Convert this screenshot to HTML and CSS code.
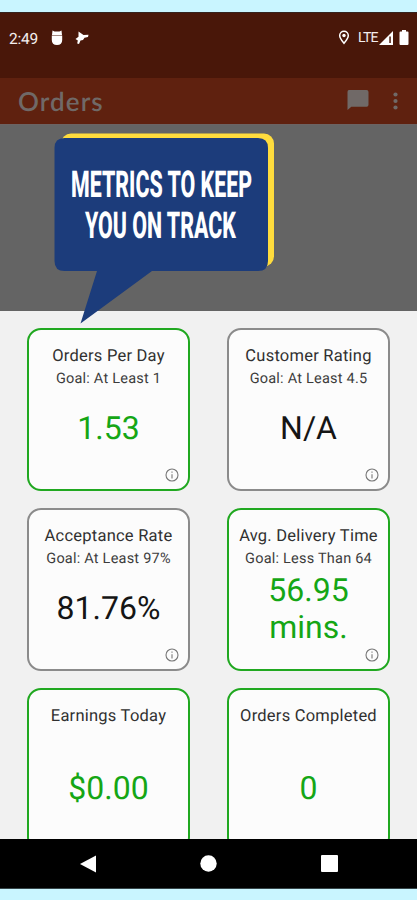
FILE: index.html
```html
<!DOCTYPE html>
<html lang="en">
<head>
<meta charset="utf-8">
<title>Orders</title>
<link rel="stylesheet" href="styles.css">
</head>
<body>
<div class="phone">
  <div class="status">
    <span class="time">2:49</span>
    <svg class="bug" width="12" height="16" viewBox="0 0 12 16" fill="#fff"><path d="M1.500.5 3.500 1.500h5l2-1 .5 4.500H1zM.8 5.500h10.400V10q0 5-5.200 5T.8 10z"/></svg>
    <svg class="bird" width="14" height="14" viewBox="0 0 14 14" fill="#fff"><path d="M3.500.5 8.500 4l5-.3-.5 2.300-3.500.8-1.500 2.200-2.500.5L4 13l-1.800-.5.6-3L.5 8l3-2.300z"/></svg>
    <span class="grow"></span>
    <svg class="pin" width="12" height="15" viewBox="0 0 12 15"><path d="M6 1.200A4.300 4.300 0 0 0 1.700 5.500C1.700 8.300 6 13.300 6 13.300s4.300-5 4.300-7.800A4.300 4.300 0 0 0 6 1.200z" fill="none" stroke="#fff" stroke-width="1.500"/><circle cx="6" cy="5.500" r="1.700" fill="#fff"/></svg>
    <span class="lte">LTE</span>
    <svg class="signal" width="14" height="14" viewBox="0 0 14 14"><path d="M0 14 14 0v14z" fill="#fff"/><path d="M10.300 5.500h1.500V12h-1.500z" fill="#491709"/></svg>
    <svg class="battery" width="10" height="15" viewBox="0 0 10 15" fill="#fff"><path d="M3 0h4v1.500h1.500q1 0 1 1V14q0 1-1 1h-7q-1 0-1-1V2.500q0-1 1-1H3z"/></svg>
  </div>
  <header class="bar">
    <h1>Orders</h1>
    <svg class="chat" width="22" height="21" viewBox="0 0 23 22" fill="#706967"><path d="M2 0h18.500q2 0 2 2v13.500q0 2-2 2H4.500L.5 21V2q0-2 1.500-2z"/></svg>
    <svg class="more" width="5" height="18" viewBox="0 0 5 18" fill="#706967"><circle cx="2.500" cy="2.500" r="2.100"/><circle cx="2.500" cy="9" r="2.100"/><circle cx="2.500" cy="15.500" r="2.100"/></svg>
  </header>
  <div class="scrim">
    <svg class="bubble" width="222" height="194" viewBox="0 0 222 194">
      <rect x="7" y="0.500" width="213" height="133" rx="10" fill="#ffdc3d"/>
      <path d="M10.500 5H204q10 0 10 10v113q0 10-10 10H98L26.500 190.500 43 138H10.500q-10 0-10-10V15q0-10 10-10z" fill="#1c3c7b"/>
      <text x="17" y="63.500" textLength="181" lengthAdjust="spacingAndGlyphs">METRICS TO KEEP</text>
      <text x="31" y="104.500" textLength="151" lengthAdjust="spacingAndGlyphs">YOU ON TRACK</text>
    </svg>
  </div>
  <main class="grid">
    <section class="card good"><h2>Orders Per Day</h2><p class="goal">Goal: At Least 1</p><p class="value">1.53</p><svg class="info" viewBox="0 0 14 14"><circle cx="7" cy="7" r="6"/><path d="M7 6.200v4.300M7 3.500v1.300"/></svg></section>
    <section class="card"><h2>Customer Rating</h2><p class="goal">Goal: At Least 4.5</p><p class="value">N/A</p><svg class="info" viewBox="0 0 14 14"><circle cx="7" cy="7" r="6"/><path d="M7 6.200v4.300M7 3.500v1.300"/></svg></section>
    <section class="card"><h2>Acceptance Rate</h2><p class="goal">Goal: At Least 97%</p><p class="value">81.76%</p><svg class="info" viewBox="0 0 14 14"><circle cx="7" cy="7" r="6"/><path d="M7 6.200v4.300M7 3.500v1.300"/></svg></section>
    <section class="card good"><h2>Avg. Delivery Time</h2><p class="goal">Goal: Less Than 64</p><p class="value">56.95<br>mins.</p><svg class="info" viewBox="0 0 14 14"><circle cx="7" cy="7" r="6"/><path d="M7 6.200v4.300M7 3.500v1.300"/></svg></section>
    <section class="card good"><h2>Earnings Today</h2><p class="goal"></p><p class="value">$0.00</p></section>
    <section class="card good"><h2>Orders Completed</h2><p class="goal"></p><p class="value">0</p></section>
  </main>
  <nav class="nav">
    <svg width="16" height="18" viewBox="0 0 16 18"><path d="M0 9 16 .5v17z" fill="#fff"/></svg>
    <svg width="17" height="17" viewBox="0 0 17 17"><circle cx="8.500" cy="8.500" r="8.200" fill="#fff"/></svg>
    <svg width="17" height="17" viewBox="0 0 17 17"><rect width="17" height="17" rx="1" fill="#fff"/></svg>
  </nav>
</div>
</body>
</html>
```
FILE: styles.css
```css
* { box-sizing: border-box; margin: 0; padding: 0; }
body { background: #c9f5ff; font-family: Roboto, sans-serif; text-rendering: geometricPrecision; }
svg { display: block; flex: none; }
.phone { height: 900px; padding: 12px 0 11px; display: flex; flex-direction: column; overflow: hidden; }
.status { height: 66px; flex: none; background: #491709; border-top: 1px solid #35231e; display: flex; align-items: flex-start; padding: 17px 8px 0 9px; color: #f4eeee; }
.time { font-size: 15.500px; line-height: 18px; width: 42px; letter-spacing: -.2px; }
.bird { margin: 1px 0 0 12px; }
.grow { flex: 1; }
.lte { font-size: 14px; line-height: 17px; margin-left: 8px; width: 21px; letter-spacing: -.7px; }
.pin { margin-top: 0; }
.signal { margin-top: 1px; }
.battery { margin: 0 0 0 6px; }
.bar { height: 46px; flex: none; background: #5f210f; display: flex; align-items: center; padding: 0 19px 0 18px; }
.bar h1 { flex: 1; font: 600 26px/44px Lato, sans-serif; letter-spacing: 1.100px; color: #706967; }
.chat { margin-bottom: 1px; }
.more { margin-left: 24px; }
.scrim { height: 187px; flex: none; background: #646464; border-top: 1px solid #6c6363; position: relative; }
.bubble { position: absolute; left: 54px; top: 8px; overflow: visible; }
.bubble text { font: 800 37px Roboto, sans-serif; fill: #fff; }
.grid { flex: 1; min-height: 0; overflow: hidden; background: #f1f1f1; padding: 17px 27px 0; display: grid; grid-template-columns: 163px 163px; grid-auto-rows: 163px; column-gap: 37px; row-gap: 17px; align-content: start; }
.card { position: relative; border: 2px solid #8b8b8b; border-radius: 14px; background: #fcfcfc; color: #151515; text-align: center; display: flex; flex-direction: column; padding-top: 16px; }
.good { border-color: #20a820; }
.card h2 { font-size: 16.500px; line-height: 22px; font-weight: 400; letter-spacing: .23px; color: #303030; white-space: nowrap; }
.goal { font-size: 14.500px; line-height: 21px; height: 21px; letter-spacing: .22px; color: #3c3c3c; white-space: nowrap; }
.value { height: 80px; display: flex; align-items: center; justify-content: center; font-size: 32px; line-height: 37.500px; letter-spacing: 0; }
.good .value { color: #15a615; }
.info { position: absolute; right: 9px; bottom: 7px; width: 14px; height: 14px; fill: none; stroke: #777; stroke-width: 1.100; }
.nav { height: 50px; flex: none; background: #000; border-bottom: 1px solid #354447; display: grid; grid-template-columns: 16px 17px 17px; column-gap: 104px; align-items: center; padding-left: 79.500px; }
```
